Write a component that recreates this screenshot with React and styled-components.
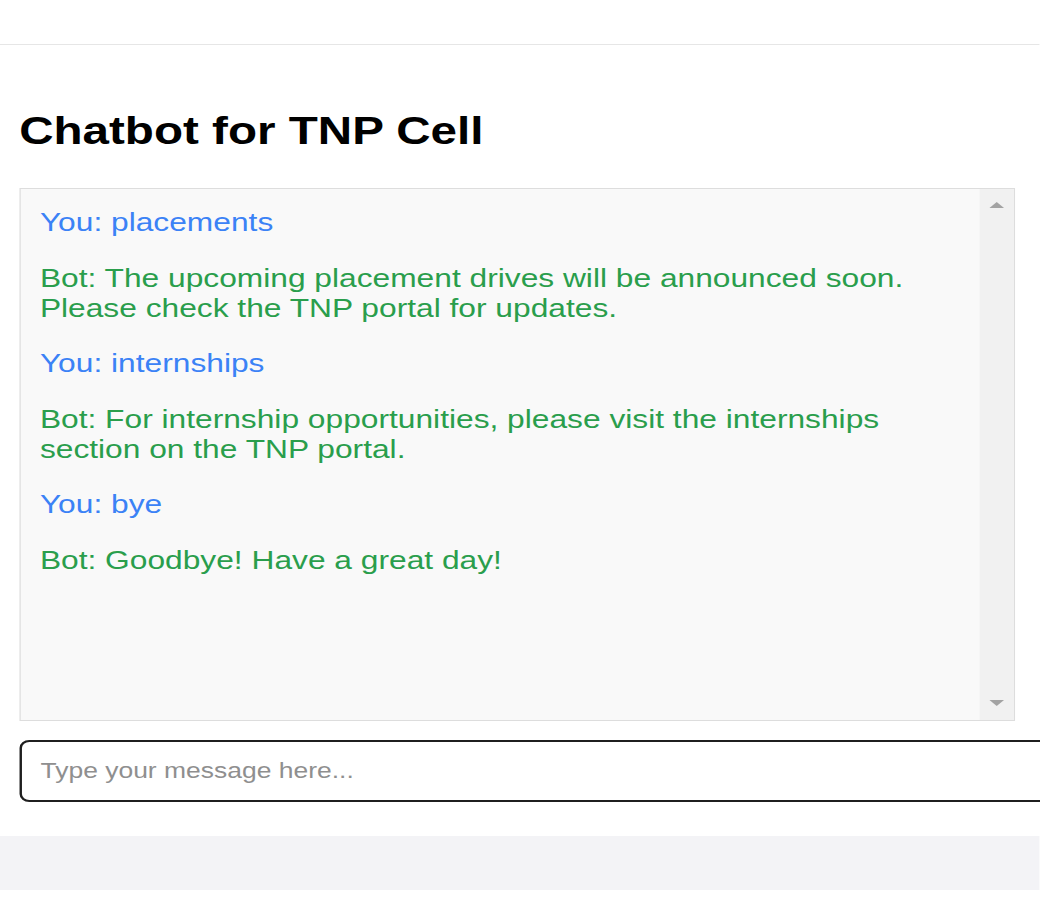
import React from "react";
import styled, { createGlobalStyle } from "styled-components";

const Global = createGlobalStyle`
  html, body {
    margin: 0;
    padding: 0;
    background: #ffffff;
    overflow: hidden;
  }
  body {
    font-family: "Liberation Sans", Arial, sans-serif;
  }
`;

const SCALE_X = 1.22;

const Page = styled.div`
  width: ${1040 / SCALE_X}px;
  transform: scaleX(${SCALE_X});
  transform-origin: 0 0;
  display: flex;
  flex-direction: column;
  font-family: "Liberation Sans", Arial, sans-serif;
`;

const TopBar = styled.header`
  height: 44px;
  background: #ffffff;
  border-bottom: 1px solid #e6e6e6;
`;

const Main = styled.main`
  display: flex;
  flex-direction: column;
  padding: 64px 20.5px 34px 15.7px;
  background: #ffffff;
`;

const Title = styled.h1`
  margin: 0;
  font-size: 39px;
  font-weight: 700;
  line-height: normal;
  color: #000000;
`;

const ChatBox = styled.section`
  margin-top: 35px;
  height: 533px;
  box-sizing: border-box;
  display: flex;
  background: #f9f9f9;
  border: 1px solid #dddddd;
`;

const Messages = styled.div`
  flex: 1;
  display: flex;
  flex-direction: column;
  gap: 25.5px;
  padding: 18px 16px;
`;

const Message = styled.p`
  margin: 0;
  font-size: 26px;
  line-height: 30px;
  color: ${(p) => (p.$from === "user" ? "#3b82f6" : "#2a9e4c")};
`;

const ScrollTrack = styled.div`
  width: 27.5px;
  background: #f1f1f1;
  display: flex;
  flex-direction: column;
  justify-content: space-between;
  align-items: center;
  padding: 13px 0 14px;
`;

const Arrow = styled.span`
  width: 0;
  height: 0;
  border-left: 6.5px solid transparent;
  border-right: 6.5px solid transparent;
  ${(p) =>
    p.$dir === "up"
      ? "border-bottom: 6px solid #a3a3a3;"
      : "border-top: 6px solid #a3a3a3;"}
`;

const Input = styled.input`
  margin-top: 19px;
  width: 100%;
  padding: 16px 16px 16px 15.5px;
  border: 2px solid #1f1f1f;
  border-radius: 8px;
  font-family: "Liberation Sans", Arial, sans-serif;
  font-size: 21.7px;
  line-height: normal;
  background: #ffffff;
  color: #222;
  outline: none;
  &::placeholder {
    color: #8f8f8f;
  }
`;

const Footer = styled.footer`
  height: 54px;
  background: #f3f3f6;
`;

const Bottom = styled.div`
  height: 12px;
  background: #ffffff;
`;

const messages = [
  { from: "user", text: "You: placements" },
  {
    from: "bot",
    text: "Bot: The upcoming placement drives will be announced soon. Please check the TNP portal for updates.",
  },
  { from: "user", text: "You: internships" },
  {
    from: "bot",
    text: "Bot: For internship opportunities, please visit the internships section on the TNP portal.",
  },
  { from: "user", text: "You: bye" },
  { from: "bot", text: "Bot: Goodbye! Have a great day!" },
];

export default function App() {
  return (
    <>
      <Global />
      <Page>
        <TopBar />
        <Main>
          <Title>Chatbot for TNP Cell</Title>
          <ChatBox>
            <Messages>
              {messages.map((m, i) => (
                <Message key={i} $from={m.from}>
                  {m.text}
                </Message>
              ))}
            </Messages>
            <ScrollTrack>
              <Arrow $dir="up" />
              <Arrow $dir="down" />
            </ScrollTrack>
          </ChatBox>
          <Input type="text" placeholder="Type your message here..." />
        </Main>
        <Footer />
        <Bottom />
      </Page>
    </>
  );
}
